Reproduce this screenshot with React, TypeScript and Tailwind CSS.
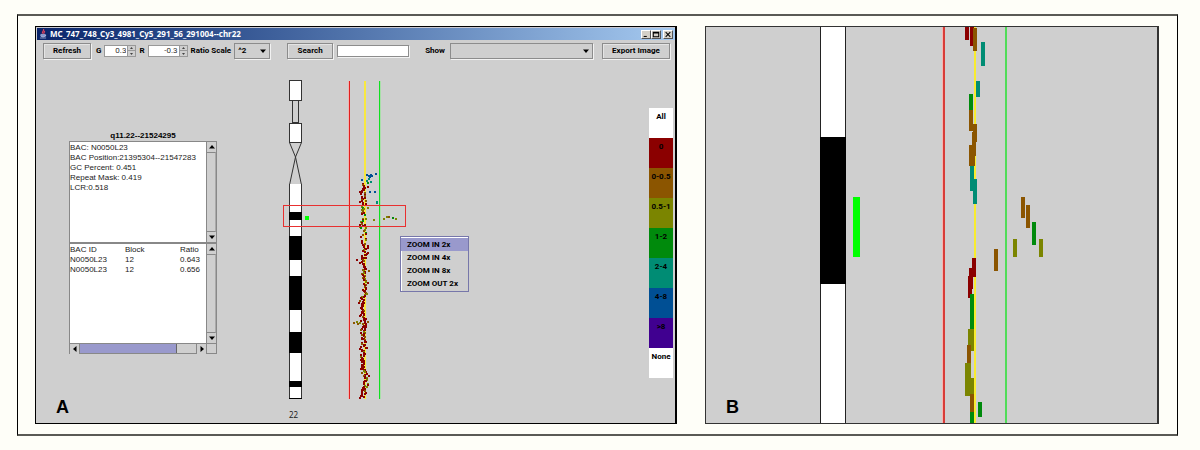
import type { ReactNode } from "react";

const RED = "#8b0000";
const BROWN = "#8b5500";
const OLIVE = "#7b8500";
const GREEN = "#008a0c";
const TEAL = "#008c74";
const BLUE = "#004f94";

const legend = [
  { label: "All", color: "bg-white" },
  { label: "0", color: "bg-[#8b0000]" },
  { label: "0-0.5", color: "bg-[#8b5500]" },
  { label: "0.5-1", color: "bg-[#7b8500]" },
  { label: "1-2", color: "bg-[#008a0c]" },
  { label: "2-4", color: "bg-[#008c74]" },
  { label: "4-8", color: "bg-[#004f94]" },
  { label: ">8", color: "bg-[#400090]" },
  { label: "None", color: "bg-white" },
];

const rows = [
  ["N0050L23", "12", "0.643"],
  ["N0050L23", "12", "0.656"],
];

const bacInfo = `BAC: N0050L23
BAC Position:21395304--21547283
GC Percent: 0.451
Repeat Mask: 0.419
LCR:0.518`;

// [top, bottom] of the dark bands of chromosome 22
const bands = [
  [212, 220],
  [236, 260],
  [276, 310],
  [332, 353],
  [381, 387],
];

// clones that sit away from the main column
const outliers: [number, number, string][] = [
  [366, 174, BLUE], [368, 175, BLUE], [370, 174, BLUE], [371, 175, BLUE], [369, 176, BLUE],
  [375, 173, BLUE], [361, 179, BLUE], [366, 180, TEAL], [368, 178, TEAL], [370, 181, TEAL],
  [367, 182, GREEN], [369, 191, BLUE], [374, 191, BLUE], [376, 201, TEAL], [376, 202, TEAL],
  [367, 207, OLIVE], [373, 219, OLIVE], [383, 218, OLIVE], [386, 216, OLIVE], [388, 216, BROWN],
  [392, 217, GREEN], [395, 218, OLIVE], [367, 186, RED], [356, 259, RED], [368, 270, BROWN],
  [358, 302, RED], [353, 322, BROWN], [356, 321, OLIVE], [357, 323, BROWN], [359, 322, OLIVE],
  [368, 375, RED],
];

// center of the main column, by height
const drift = [
  [180, 363], [195, 362], [215, 362], [228, 362], [247, 364], [258, 362], [270, 363],
  [282, 365], [302, 361], [320, 363], [345, 363], [365, 362], [377, 365], [398, 361],
];

function centerAt(y: number) {
  const i = Math.max(1, drift.findIndex((d) => d[0] >= y));
  const [y0, x0] = drift[i - 1];
  const [y1, x1] = drift[i];
  return x0 + ((x1 - x0) * (y - y0)) / (y1 - y0);
}

function columnPoints() {
  const points: [number, number, string][] = [];
  let seed = 22;
  const rand = () => {
    seed = (seed * 16807) % 2147483647;
    return seed / 2147483647;
  };
  for (let y = 183; y < 397; y += 0.75) {
    const x = Math.round(centerAt(y) + (rand() + rand() - 1) * 4);
    const r = rand();
    let color = r < 0.8 ? RED : r < 0.93 ? BROWN : OLIVE;
    if (y > 204 && y < 240) {
      color = r < 0.3 ? GREEN : r < 0.6 ? OLIVE : r < 0.8 ? BROWN : RED;
      if (rand() < 0.3) continue;
    }
    points.push([x, Math.round(y), color]);
  }
  return points;
}

// zoomed clones: x, top, bottom, color
const bars: [number, number, number, string][] = [
  [965, 27, 40, RED], [970, 27, 46, RED], [973, 28, 51, BROWN], [981, 42, 66, TEAL],
  [976, 81, 97, TEAL], [969, 94, 110, GREEN], [969, 110, 131, BROWN], [973, 124, 142, BROWN],
  [972, 132, 156, BROWN], [969, 145, 166, BROWN], [971, 145, 166, BROWN], [970, 166, 191, TEAL],
  [973, 179, 204, TEAL], [1021, 197, 218, BROWN], [1026, 205, 228, BROWN], [1032, 222, 245, GREEN],
  [1013, 239, 257, OLIVE], [1039, 239, 257, OLIVE], [994, 249, 271, BROWN], [972, 258, 277, RED],
  [969, 268, 289, RED], [968, 276, 298, RED], [970, 294, 330, GREEN], [968, 329, 346, OLIVE],
  [970, 329, 351, OLIVE], [967, 345, 363, BROWN], [965, 363, 396, OLIVE], [967, 363, 396, OLIVE],
  [970, 378, 396, OLIVE], [970, 394, 412, BROWN], [970, 412, 423, GREEN], [978, 402, 417, GREEN],
];

function Arrow({ d }: { d: string }) {
  return (
    <svg viewBox="0 0 6 6" className="h-[6px] w-[6px]" aria-hidden="true">
      <path d={d} fill="#000" />
    </svg>
  );
}

const UP = "M3 1 6 4.5H0z";
const DOWN = "M0 1.5H6L3 5z";
const LEFT = "M1 3 4.5 0V6z";
const RIGHT = "M1.5 0V6L5 3z";

function ArrowButton({ label, d }: { label: string; d: string }) {
  return (
    <button
      aria-label={label}
      className="flex h-[10px] w-[9px] shrink-0 items-center justify-center bg-[#cfcfcf]"
    >
      <Arrow d={d} />
    </button>
  );
}

function VScroll() {
  return (
    <div className="flex w-[10px] shrink-0 flex-col border-l border-[#888] bg-[#cfcfcf]">
      <ArrowButton label="Scroll up" d={UP} />
      <div className="flex-1 border-y border-r border-[#888] border-r-[#aaa]" />
      <ArrowButton label="Scroll down" d={DOWN} />
    </div>
  );
}

function ToolButton({ children, className }: { children: ReactNode; className: string }) {
  return (
    <button
      className={`h-4 shrink-0 border border-[#8c8c8c] text-center shadow-[1px_1px_0_#f2f2f2,inset_1px_1px_0_#e4e4e4] ${className}`}
    >
      {children}
    </button>
  );
}

function Spinner({ label, value, className }: { label: string; value: string; className: string }) {
  return (
    <label className="flex shrink-0 items-center gap-[3px]">
      {label}
      <span className={`flex h-3 border border-[#999] ${className}`}>
        <input
          defaultValue={value}
          className="min-w-0 flex-1 bg-white pr-px text-right text-[8px] leading-[10px] font-normal text-[#333] outline-none"
        />
        <span className="flex w-2 shrink-0 flex-col border-l border-[#999]">
          <button aria-label={`${label} up`} className="flex h-[5px] items-center justify-center border-b border-[#999]">
            <svg viewBox="0 0 3 2" className="h-[2px] w-[3px]"><path d="M1.5 0 3 2H0z" fill="#444" /></svg>
          </button>
          <button aria-label={`${label} down`} className="flex h-[5px] items-center justify-center">
            <svg viewBox="0 0 3 2" className="h-[2px] w-[3px]"><path d="M0 0H3L1.5 2z" fill="#444" /></svg>
          </button>
        </span>
      </span>
    </label>
  );
}

function Select({ label, options, className }: { label: string; options: string[]; className: string }) {
  return (
    <span className={`relative flex h-4 ${className}`}>
      <select
        aria-label={label}
        className="w-full appearance-none border border-[#8c8c8c] bg-[#cfcfcf] pl-[3px] text-[8px] leading-[12px] font-bold shadow-[1px_1px_0_#f2f2f2]"
      >
        {options.map((o) => (
          <option key={o}>{o}</option>
        ))}
      </select>
      <span className="pointer-events-none absolute inset-y-0 right-1 flex items-center">
        <Arrow d={DOWN} />
      </span>
    </span>
  );
}

function TitleBar() {
  return (
    <div className="flex h-3 items-center bg-linear-to-r from-[#0a246a] to-[#a6caf0] pr-[2px] pl-[2px]">
      <svg viewBox="0 0 9 11" className="h-[10px] w-[8px]" aria-hidden="true">
        <path d="M5 0C6 2 3 3 4 5M6 2C7 3 5 4 5.5 5.5" stroke="#e0405a" strokeWidth="1.3" fill="none" />
        <path d="M2 6H7V8Q4.5 10 2 8zM7 6.5Q9 7 7 8" stroke="#b9c4e8" strokeWidth=".7" fill="#8495cc" />
        <path d="M1 10H8" stroke="#b9c4e8" strokeWidth=".8" />
      </svg>
      <h1 className="ml-[3px] flex-1 font-['Noto_Sans'] text-[8px] leading-[12px] font-bold text-white">
        MC_747_748_Cy3_4981_Cy5_291_56_291004--chr22
      </h1>
      <WindowButton label="Minimize" d="M2 7H6" />
      <WindowButton label="Maximize" d="M1.5 1.5H8.5V7.5H1.5zM1.5 2.5H8.5" />
      <span className="w-[2px]" />
      <WindowButton label="Close" d="M2 1.5 8 7.5M8 1.5 2 7.5" />
    </div>
  );
}

function WindowButton({ label, d }: { label: string; d: string }) {
  return (
    <button
      aria-label={label}
      className="h-[9px] w-[10px] border border-t-white border-r-[#555] border-b-[#555] border-l-white bg-[#d4d0c8]"
    >
      <svg viewBox="0 0 10 9" className="h-full w-full" aria-hidden="true">
        <path d={d} stroke="#000" strokeWidth="1.3" fill="none" />
      </svg>
    </button>
  );
}

function Toolbar() {
  return (
    <div className="flex items-center pt-[3px] pr-[5px] pb-[3px] pl-[7px] text-[8px] leading-[12px] font-bold">
      <ToolButton className="mr-[5px] w-12">Refresh</ToolButton>
      <div className="flex items-center gap-[3px]">
        <Spinner label="G" value="0.3" className="w-8" />
        <Spinner label="R" value="-0.3" className="w-10" />
        <span className="shrink-0 whitespace-nowrap">Ratio Scale</span>
        <Select label="Ratio Scale" options={["^2", "^10"]} className="w-9 shrink-0" />
      </div>
      <ToolButton className="ml-[17px] w-[46px]">Search</ToolButton>
      <input
        aria-label="Search"
        className="ml-1 h-3 w-[72px] shrink-0 border border-[#8c8c8c] bg-white font-normal shadow-[1px_1px_0_#f2f2f2]"
      />
      <span className="mr-[5px] ml-4">Show</span>
      <Select label="Show" options={[""]} className="flex-1" />
      <ToolButton className="ml-[9px] w-[68px]">Export Image</ToolButton>
    </div>
  );
}

function Details() {
  return (
    <section className="mt-[69px] w-[148px] shrink-0 font-['Liberation_Sans'] text-[8px] leading-[10px]">
      <h2 className="text-center font-bold">q11.22--21524295</h2>
      <div className="flex h-[102px] border border-[#888]">
        <textarea
          readOnly
          aria-label="BAC details"
          value={bacInfo}
          className="min-w-0 flex-1 resize-none overflow-hidden bg-white pt-px whitespace-pre text-[#222] outline-none"
        />
        <VScroll />
      </div>
      <div className="border border-[#888]">
        <div className="flex h-[99px]">
          <div className="min-w-0 flex-1 bg-white pt-px text-[#222]">
            <table className="w-[165px] table-fixed text-left">
              <thead>
                <tr>
                  <th className="p-0 font-normal">BAC ID</th>
                  <th className="p-0 font-normal">Block</th>
                  <th className="p-0 font-normal">Ratio</th>
                </tr>
              </thead>
              <tbody>
                {rows.map((row, i) => (
                  <tr key={i}>
                    {row.map((cell) => (
                      <td key={cell} className="p-0">{cell}</td>
                    ))}
                  </tr>
                ))}
              </tbody>
            </table>
          </div>
          <VScroll />
        </div>
        <div className="flex h-[10px] border-t border-[#888] bg-[#cfcfcf]">
          <ArrowButton label="Scroll left" d={LEFT} />
          <div className="flex-1 border-x border-[#888]">
            <div className="h-full w-5/6 border-r border-[#666] bg-[#9999cc]" />
          </div>
          <ArrowButton label="Scroll right" d={RIGHT} />
          <div className="w-[10px] border-l border-[#888]" />
        </div>
      </div>
    </section>
  );
}

function Chromosome() {
  return (
    <svg viewBox="280 80 140 320" className="h-[320px] w-[140px]" role="img" aria-label="Chromosome 22 ratio plot">
      <g fill="#fff" stroke="#333">
        <rect x="289.5" y="80.5" width="12" height="20" />
        <rect x="292.5" y="100.5" width="6" height="22" fill="none" />
        <rect x="289.5" y="123.5" width="12" height="19" />
        <path d="M289.5 142.5 295.5 157 301.5 185M301.5 142.5 295.5 157 289.5 185" fill="none" />
        <rect x="289.5" y="184.5" width="12" height="214" />
      </g>
      <path d="M290 184.5H301" stroke="#fff" />
      {bands.map(([top, bottom]) => (
        <rect key={top} x="289" y={top} width="13" height={bottom - top} />
      ))}
      <path d="M289 398.5H302" stroke="#000" />
      <rect x="305" y="216" width="4" height="4" fill="#0f0" />
      <rect x="348" y="81" width="2" height="318" fill="#f0b4b0" />
      <rect x="349" y="81" width="1" height="318" fill="#e02020" />
      <rect x="364" y="81" width="2" height="318" fill="#f8e840" />
      <rect x="379" y="81" width="2" height="318" fill="#a8e0a8" />
      <rect x="379" y="81" width="1" height="318" fill="#10e020" />
      {[...columnPoints(), ...outliers].map(([x, y, color], i) => (
        <rect key={i} x={x} y={y} width="2" height="2" fill={color} />
      ))}
      <rect x="283.5" y="205.5" width="122" height="21" fill="none" stroke="#e83030" />
    </svg>
  );
}

function ZoomMenu() {
  return (
    <div
      role="menu"
      className="absolute top-[174px] left-[120px] w-[69px] border border-[#7777aa] bg-[#cfcfcf] pt-px pb-px text-[8px] leading-[13px] font-bold shadow-[inset_1px_1px_0_#fff]"
    >
      {["ZOOM IN 2x", "ZOOM IN 4x", "ZOOM IN 8x", "ZOOM OUT 2x"].map((item, i) => (
        <button
          key={item}
          role="menuitem"
          className={`block w-full pl-[6px] text-left whitespace-nowrap ${i === 0 ? "bg-[#9999cc]" : ""}`}
        >
          {item}
        </button>
      ))}
    </div>
  );
}

function PanelLetter({ children }: { children: ReactNode }) {
  return (
    <p className="absolute bottom-[6px] left-5 font-['Liberation_Sans'] text-[18px] leading-[20px] font-bold">{children}</p>
  );
}

function Viewer() {
  return (
    <section className="relative border border-r-2 border-black bg-[#cfcfcf]">
      <div className="border-t border-[#c8c8d0] pl-px">
        <TitleBar />
      </div>
      <Toolbar />
      <div className="flex pb-[2px] pl-[33px]">
        <Details />
        <div className="relative ml-[63px] pt-[18px]">
          <Chromosome />
          <p className="mt-[9px] ml-[9px] font-['Noto_Sans'] text-[8px] leading-[12px] text-[#222]">22</p>
          <ZoomMenu />
        </div>
        <div className="mt-[46px] mr-[2px] ml-auto w-6">
          {legend.map(({ label, color }) => (
            <button
              key={label}
              className={`flex h-[30px] w-full justify-center pt-1 text-[8px] leading-[10px] font-bold ${color}`}
            >
              {label}
            </button>
          ))}
        </div>
      </div>
      <PanelLetter>A</PanelLetter>
    </section>
  );
}

function ZoomedPlot() {
  return (
    <section className="relative border border-r-2 border-[#333] bg-[#cfcfcf]">
      <svg viewBox="706 27 451 396" className="block h-full w-full" role="img" aria-label="Zoomed region">
        <rect x="820" y="27" width="26" height="396" fill="#fff" />
        <path d="M820.5 27V423M845.5 27V423" stroke="#222" />
        <rect x="820" y="137" width="26" height="147" />
        <rect x="853" y="197" width="7" height="60" fill="#0f0" />
        <path d="M943 27V423" stroke="#f5b5b0" strokeWidth="2" />
        <path d="M944 27V423" stroke="#d83c38" strokeWidth="2" />
        <path d="M975 27V423" stroke="#f8ec30" strokeWidth="2" />
        <path d="M1006 27V423" stroke="#50dc58" strokeWidth="2" />
        {bars.map(([x, top, bottom, color], i) => (
          <rect key={i} x={x} y={top} width="4" height={bottom - top} fill={color} />
        ))}
      </svg>
      <PanelLetter>B</PanelLetter>
    </section>
  );
}

export default function App() {
  return (
    <main className="min-h-screen bg-[#fefef8] pt-[14px] pr-[22px] pb-[14px] pl-[17px] font-['Roboto',sans-serif] text-black">
      <div className="grid grid-cols-[642fr_454fr] gap-7 border border-y-2 border-black border-y-[#5a5a55] py-[10px] pr-[18px] pl-[17px]">
        <Viewer />
        <ZoomedPlot />
      </div>
    </main>
  );
}
